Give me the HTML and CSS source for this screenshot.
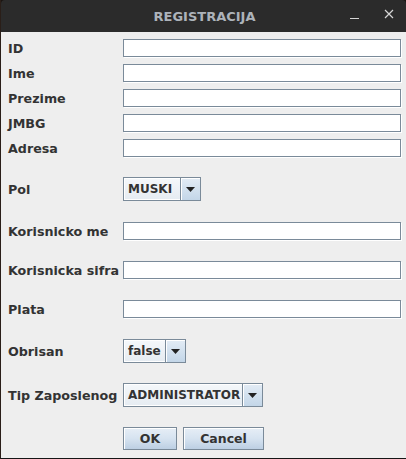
FILE: index.html
```html
<!DOCTYPE html>
<html>
<head>
<meta charset="utf-8">
<link rel="stylesheet" href="styles.css">
</head>
<body>
<div class="window">
  <div class="titlebar">
    <span class="title">REGISTRACIJA</span>
    <span class="controls">
      <svg class="min" width="10" height="10" viewBox="0 0 10 10"><line x1="0" y1="8.5" x2="9" y2="8.5" stroke="#d5d5d5" stroke-width="1"/></svg>
      <svg class="close" width="10" height="10" viewBox="0 0 10 10"><path d="M1 1 L9 9 M9 1 L1 9" stroke="#d5d5d5" stroke-width="1.2"/></svg>
    </span>
  </div>
  <div class="content">
    <div class="row text first"><label>ID</label><div class="field"></div></div>
    <div class="row text"><label>Ime</label><div class="field"></div></div>
    <div class="row text"><label>Prezime</label><div class="field"></div></div>
    <div class="row text"><label>JMBG</label><div class="field"></div></div>
    <div class="row text"><label>Adresa</label><div class="field"></div></div>
    <div class="row combo-row gap20"><label>Pol</label>
      <div class="combo w-pol"><span class="value">MUSKI</span><span class="arrow"><svg width="9" height="5" viewBox="0 0 9 5"><path d="M0 0 H9 L4.5 5 Z" fill="#222"/></svg></span></div>
    </div>
    <div class="row text gap21"><label>Korisnicko me</label><div class="field"></div></div>
    <div class="row text gap21"><label>Korisnicka sifra</label><div class="field"></div></div>
    <div class="row text gap21"><label>Plata</label><div class="field"></div></div>
    <div class="row combo-row gap21"><label>Obrisan</label>
      <div class="combo w-obr"><span class="value">false</span><span class="arrow"><svg width="9" height="5" viewBox="0 0 9 5"><path d="M0 0 H9 L4.5 5 Z" fill="#222"/></svg></span></div>
    </div>
    <div class="row combo-row gap20"><label>Tip Zaposlenog</label>
      <div class="combo w-tip"><span class="value">ADMINISTRATOR</span><span class="arrow"><svg width="9" height="5" viewBox="0 0 9 5"><path d="M0 0 H9 L4.5 5 Z" fill="#222"/></svg></span></div>
    </div>
    <div class="row buttons gap20"><label></label>
      <button class="btn ok">OK</button>
      <button class="btn cancel">Cancel</button>
    </div>
  </div>
</div>
</body>
</html>
```

FILE: styles.css
```css
html, body {
  margin: 0;
  padding: 0;
  background: #1a1410;
}
.window {
  width: 406px;
  height: 459px;
  display: flex;
  flex-direction: column;
  box-sizing: border-box;
  border-left: 1px solid #2a1e18;
  border-bottom: 1px solid #151515;
  font-family: "DejaVu Sans", sans-serif;
}
.titlebar {
  height: 32px;
  flex: none;
  background: #2b2b2b;
  border-radius: 4px 4px 0 0;
  position: relative;
  display: flex;
  align-items: center;
  justify-content: center;
}
.title {
  color: #adb3ba;
  font-weight: bold;
  font-size: 13px;
  margin-left: 2px;
}
.controls {
  position: absolute;
  right: 12px;
  top: 9px;
  display: flex;
  gap: 24px;
}
.min { margin-top: 1px; }
.content {
  flex: 1;
  background: #eeeeee;
  padding: 7px 4px 0 7px;
}
.row {
  display: flex;
  align-items: center;
}
.row label {
  width: 115px;
  flex: none;
  font-weight: bold;
  font-size: 12.7px;
  color: #333333;
  padding-top: 1px;
  white-space: nowrap;
}
.row.text { height: 18px; margin-top: 7px; }
.row.text.first { margin-top: 0; }
.row.combo-row { height: 24px; }
.row.buttons { height: 23px; gap: 6px; }
.row.buttons label { width: 109px; }
.gap20 { margin-top: 20px !important; }
.gap21 { margin-top: 21px !important; }
.field {
  flex: none;
  width: 278px;
  height: 18px;
  box-sizing: border-box;
  background: #ffffff;
  border: 1px solid #7a8a99;
  box-shadow: 1px 1px 0 #ffffff;
}
.combo {
  height: 24px;
  box-sizing: border-box;
  border: 1px solid #7a8a99;
  display: flex;
  background: #eef1f5;
}
.combo .value {
  flex: 1;
  font-weight: bold;
  font-size: 12px;
  color: #333333;
  padding-left: 3px;
  display: flex;
  align-items: center;
  background: linear-gradient(#f4f7fa, #e6ecf2);
  border: 1px solid #ffffff;
  border-right: none;
  white-space: nowrap;
}
.combo .arrow {
  width: 19px;
  flex: none;
  border-left: 1px solid #7a8a99;
  background: linear-gradient(#e3ecf5, #c3d6e8);
  display: flex;
  align-items: center;
  justify-content: center;
  box-shadow: inset 1px 1px 0 #ffffff;
}
.w-pol { width: 78px; }
.w-obr { width: 63px; }
.w-tip { width: 140px; }
.btn {
  height: 23px;
  box-sizing: border-box;
  border: 1px solid #7a8a99;
  background: linear-gradient(#e6eef6 0%, #d6e3f0 50%, #bccfe3 100%);
  box-shadow: inset 1px 1px 0 #ffffff;
  font-family: "DejaVu Sans", sans-serif;
  font-weight: bold;
  font-size: 12.5px;
  color: #333333;
  padding: 0;
  margin: 0;
}
.btn.ok { width: 54px; }
.btn.cancel { width: 81px; }
```
